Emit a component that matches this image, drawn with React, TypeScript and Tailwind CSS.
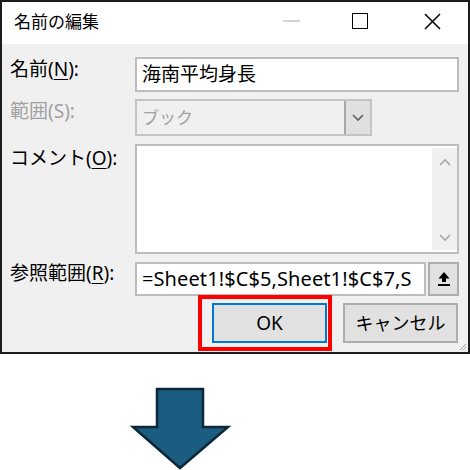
import React from "react";

const font = { fontFamily: "'Noto Sans', 'Noto Sans CJK JP', sans-serif" };

function Chevron({ up, color, w = 12 }: { up?: boolean; color: string; w?: number }) {
  return (
    <svg width={w} height={w / 2 + 2} viewBox="0 0 12 8">
      <polyline
        points={up ? "1,7 6,2 11,7" : "1,1 6,6 11,1"}
        fill="none"
        stroke={color}
        strokeWidth="1.6"
      />
    </svg>
  );
}

export default function App() {
  return (
    <div className="w-[470px] h-[470px] bg-white flex flex-col" style={font}>
      <div className="relative w-[470px] h-[354px] border-2 border-[#1c1c1c] bg-[#f0f0f0] flex flex-col">
        {/* title bar */}
        <div className="h-[42px] bg-white flex items-center">
          <div className="pl-[12px] text-[17px] text-black leading-none flex-1 -mt-[3px]">名前の編集</div>
          <div className="w-[17px] h-[2px] bg-[#d4d4d4] -mt-[4px] mr-[52px]" />
          <div className="w-[16px] h-[16px] border-[1.5px] border-black mr-[56px] -mt-[5px]" />
          <svg width="17" height="17" viewBox="0 0 17 17" className="mr-[27px] -mt-[4px]">
            <path d="M1 1 L16 16 M16 1 L1 16" stroke="black" strokeWidth="1.5" />
          </svg>
        </div>
        {/* body */}
        <div className="flex flex-col pl-[8px] pr-[9px] pt-[13px]">
          {/* row 1 */}
          <div className="flex items-start">
            <div className="w-[125px] text-[19px] leading-[28px] text-black -mt-[2px]">
              名前(<span className="underline underline-offset-[3px]">N</span>):
            </div>
            <div className="flex-1 h-[35px] bg-white border-2 border-[#bdbdbd] flex items-center pl-[5px] text-[19px] text-black">
              海南平均身長
            </div>
          </div>
          {/* row 2 */}
          <div className="flex items-start mt-[7px]">
            <div className="w-[125px] text-[19px] leading-[28px] text-[#a0a0a0] -mt-[2px]">範囲(S):</div>
            <div className="w-[237px] h-[37px] bg-[#f0f0f0] border-2 border-[#c4c4c4] flex items-stretch">
              <div className="flex-1 flex items-center pl-[5px] text-[17px] text-[#a0a0a0]">ブック</div>
              <div className="w-[26px] bg-[#e0e0e0] border-l-2 border-[#a8a8a8] flex items-center justify-center">
                <Chevron color="#606060" w={12} />
              </div>
            </div>
          </div>
          {/* row 3 */}
          <div className="flex items-start mt-[8px]">
            <div className="w-[125px] text-[19px] leading-[28px] text-black mt-[0px]">
              コメント(<span className="underline underline-offset-[3px]">O</span>):
            </div>
            <div className="flex-1 h-[110px] bg-white border-2 border-[#bdbdbd] flex justify-end pt-[2px] pb-[2px] pr-0">
              <div className="w-[25px] bg-[#f0f0f0] flex flex-col items-center justify-between pt-[10px] pb-[8px]">
                <Chevron up color="#a6a6a6" w={12} />
                <Chevron color="#a6a6a6" w={12} />
              </div>
            </div>
          </div>
          {/* row 4 */}
          <div className="flex items-start mt-[8px]">
            <div className="w-[125px] text-[19px] leading-[28px] text-black -mt-[3px]">
              参照範囲(<span className="underline underline-offset-[3px]">R</span>):
            </div>
            <div className="flex-1 flex items-stretch h-[34px] gap-[2px]">
              <div className="flex-1 bg-white border-2 border-[#bdbdbd] flex items-center pl-[5px] text-[20px] tracking-[0.1px] text-black overflow-hidden whitespace-nowrap">
                =Sheet1!$C$5,Sheet1!$C$7,S
              </div>
              <div className="w-[31px] bg-[#e1e1e1] border-2 border-[#adadad] flex items-center justify-center">
                <svg width="14" height="16" viewBox="0 0 14 16">
                  <path d="M7 1 L12.5 7.5 L9 7.5 L9 11 L5 11 L5 7.5 L1.5 7.5 Z" fill="black" />
                  <rect x="1" y="13" width="12" height="2" fill="black" />
                </svg>
              </div>
            </div>
          </div>
          {/* buttons */}
          <div className="flex justify-end gap-[16px] mt-[7px] pr-[1px]">
            <div className="relative w-[115px] h-[40px]">
              <div className="absolute -left-[14px] -right-[5px] -top-[8px] -bottom-[8px] border-4 border-[#ff0000]" />
              <div className="w-full h-full bg-[#e1e1e1] border-2 border-[#0078d7] flex items-center justify-center text-[19px] text-black">
                OK
              </div>
            </div>
            <div className="w-[115px] h-[40px] bg-[#e1e1e1] border-2 border-[#adadad] flex items-center justify-center text-[18px] text-black">
              キャンセル
            </div>
          </div>
        </div>
        <svg width="8" height="8" viewBox="0 0 8 8" className="absolute right-[1px] bottom-[1px]">
          <path d="M7 1 L1 7 M7 4 L4 7" stroke="#a0a0a0" strokeWidth="1" />
        </svg>
      </div>
      {/* arrow */}
      <svg width="470" height="116" viewBox="0 0 470 116">
        <polygon
          points="157,35 203,35 203,73 228,73 180,114 133,73 157,73"
          fill="#1b5d80"
          stroke="#0e2736"
          strokeWidth="2.5"
          strokeLinejoin="miter"
        />
      </svg>
    </div>
  );
}
